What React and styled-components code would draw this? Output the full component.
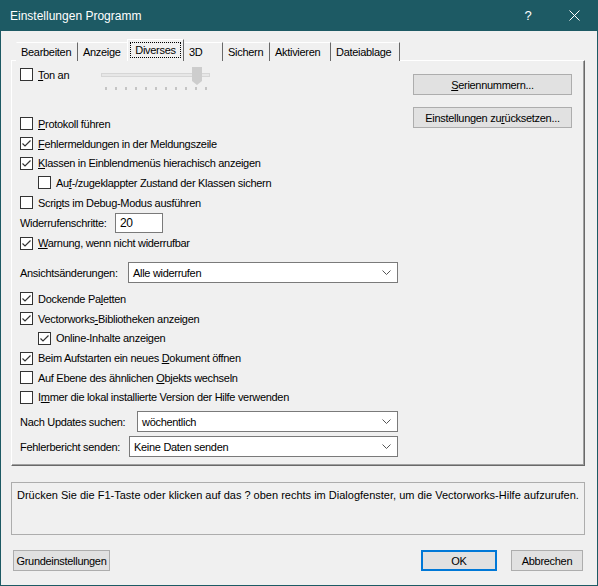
import React from "react";
import styled, { createGlobalStyle } from "styled-components";

const GlobalStyle = createGlobalStyle`
  html, body {
    margin: 0;
    padding: 0;
    background: #f0f0f0;
  }
  * {
    box-sizing: border-box;
  }
`;

const Window = styled.div`
  width: 598px;
  height: 586px;
  border: 1px solid #1d5a64;
  border-top: none;
  background: #f0f0f0;
  font-family: "Liberation Sans", Arial, sans-serif;
  font-size: 11px;
  letter-spacing: -0.3px;
  color: #000;
  display: flex;
  flex-direction: column;
`;

const TitleBar = styled.div`
  height: 31px;
  background: #1d5a64;
  color: #fff;
  display: flex;
  align-items: center;
  padding-left: 9px;
  font-size: 12px;
  letter-spacing: 0;
`;

const Title = styled.div`
  flex: 1;
`;

const TitleButton = styled.div`
  width: 46px;
  height: 31px;
  display: flex;
  align-items: center;
  justify-content: center;
  font-size: 13px;
`;

const Main = styled.div`
  padding: 9px 12px 0 10px;
  display: flex;
  flex-direction: column;
`;

const TabStrip = styled.div`
  display: flex;
  align-items: flex-end;
  height: 21px;
  padding-left: 5px;
  position: relative;
  z-index: 1;
  margin-bottom: -1px;
`;

const Tab = styled.div`
  width: ${(p) => p.$w}px;
  height: ${(p) => (p.$active ? 22 : 19)}px;
  padding: ${(p) => (p.$active ? "2px 2px 3px" : "0 4px")};
  display: flex;
  align-items: center;
  justify-content: ${(p) => (p.$active ? "stretch" : "flex-start")};
  border-top: 1px solid #fff;
  border-left: 1px solid ${(p) => (p.$active ? "#fff" : "transparent")};
  border-right: 1px solid #696969;
  background: #f0f0f0;
  margin-left: ${(p) => (p.$active ? -1 : 0)}px;
`;

const TabFocus = styled.div`
  flex: 1;
  height: 100%;
  border: 1px dotted #000;
  display: flex;
  align-items: center;
  justify-content: center;
`;

const Panel = styled.div`
  height: 406px;
  border-top: 1px solid #fff;
  border-left: 1px solid #fff;
  border-right: 1px solid #696969;
  border-bottom: 1px solid #696969;
  box-shadow: inset -1px -1px 0 #a0a0a0;
  display: flex;
  padding: 3px 11px 0 8px;
`;

const LeftCol = styled.div`
  width: 378px;
  display: flex;
  flex-direction: column;
`;

const RightCol = styled.div`
  margin-left: 15px;
  padding-top: 10px;
  display: flex;
  flex-direction: column;
  gap: 12px;
`;

const TopBlock = styled.div`
  height: 50px;
  display: flex;
  align-items: flex-start;
`;

const Row = styled.div`
  height: ${(p) => p.$h || 19.7}px;
  margin-top: ${(p) => p.$mt || 0}px;
  padding-left: ${(p) => p.$indent || 0}px;
  display: flex;
  align-items: center;
  white-space: nowrap;
  width: ${(p) => (p.$w ? `${p.$w}px` : "auto")};
`;

const Box = styled.span`
  width: 13px;
  height: 13px;
  border: 1px solid #333;
  background: #fff;
  margin-right: 5px;
  display: inline-flex;
  flex-shrink: 0;
`;

const Key = styled.span`
  text-decoration: underline;
  text-underline-offset: 1px;
`;

const Label = styled.span`
  width: ${(p) => p.$w}px;
  flex-shrink: 0;
`;

const NumInput = styled.div`
  width: 48px;
  height: 20px;
  background: #fff;
  border: 1px solid #7a7a7a;
  padding-left: 4px;
  display: flex;
  align-items: center;
  font-size: 12px;
`;

const Select = styled.div`
  flex: 1;
  height: 21px;
  background: #fff;
  border: 1px solid #7a7a7a;
  display: flex;
  align-items: center;
  padding: 0 6px 0 4px;
`;

const SelectText = styled.span`
  flex: 1;
`;

const Button = styled.div`
  width: ${(p) => p.$w}px;
  height: 21px;
  background: #e1e1e1;
  border: ${(p) => (p.$default ? "2px solid #0078d7" : "1px solid #adadad")};
  display: flex;
  align-items: center;
  justify-content: center;
  white-space: nowrap;
`;

const HelpBox = styled.div`
  margin-top: 16px;
  height: 53px;
  border: 1px solid #adadad;
  padding: 6px 5px;
  white-space: nowrap;
  letter-spacing: 0;
`;

const Footer = styled.div`
  margin-top: 15px;
  padding: 0 2px 0 2px;
  display: flex;
  gap: 14px;
`;

const Spacer = styled.div`
  flex: 1;
`;

const Check = ({ on }) => (
  <Box>
    {on && (
      <svg width="11" height="11" viewBox="0 0 11 11">
        <polyline points="1.5,5.5 4,8 9.5,2.5" fill="none" stroke="#333" strokeWidth="1.2" />
      </svg>
    )}
  </Box>
);

const CheckRow = ({ on, indent, mt, children }) => (
  <Row $indent={indent} $mt={mt}>
    <Check on={on} />
    <span>{children}</span>
  </Row>
);

const Chevron = () => (
  <svg width="9" height="6" viewBox="0 0 9 6">
    <polyline points="0.5,0.5 4.5,4.5 8.5,0.5" fill="none" stroke="#555" strokeWidth="1" />
  </svg>
);

const Combo = ({ label, labelW, value, mt }) => (
  <Row $h={21} $mt={mt}>
    <Label $w={labelW}>{label}</Label>
    <Select>
      <SelectText>{value}</SelectText>
      <Chevron />
    </Select>
  </Row>
);

const Slider = () => {
  const ticks = [];
  for (let i = 0; i <= 10; i++) {
    ticks.push(<line key={i} x1={7 + i * 10} y1="23" x2={7 + i * 10} y2="26" stroke="#9a9a9a" />);
  }
  return (
    <svg width="114" height="28" viewBox="0 0 114 28">
      <rect x="2.5" y="9.5" width="108" height="3" fill="#e7e7e7" stroke="#d6d6d6" />
      <path d="M93 3 H103 V17 L98 21 L93 17 Z" fill="#cdcdcd" />
      {ticks}
    </svg>
  );
};

const tabs = [
  { name: "Bearbeiten", w: 62 },
  { name: "Anzeige", w: 50 },
  { name: "Diverses", w: 57, active: true },
  { name: "3D", w: 39 },
  { name: "Sichern", w: 47 },
  { name: "Aktivieren", w: 61 },
  { name: "Dateiablage", w: 69 },
];

const App = () => {
  return (
    <>
      <GlobalStyle />
      <Window>
        <TitleBar>
          <Title>Einstellungen Programm</Title>
          <TitleButton>?</TitleButton>
          <TitleButton>
            <svg width="11" height="11" viewBox="0 0 11 11">
              <path d="M0.5 0.5 L10.5 10.5 M10.5 0.5 L0.5 10.5" stroke="#fff" strokeWidth="1" />
            </svg>
          </TitleButton>
        </TitleBar>

        <Main>
          <TabStrip>
            {tabs.map((t) =>
              t.active ? (
                <Tab key={t.name} $w={t.w} $active>
                  <TabFocus>{t.name}</TabFocus>
                </Tab>
              ) : (
                <Tab key={t.name} $w={t.w}>
                  {t.name}
                </Tab>
              )
            )}
          </TabStrip>

          <Panel>
            <LeftCol>
              <TopBlock>
                <Row $h={21} $w={79}>
                  <Check />
                  <span>
                    <Key>T</Key>on an
                  </span>
                </Row>
                <Slider />
              </TopBlock>

              <CheckRow>
                <Key>P</Key>rotokoll führen
              </CheckRow>
              <CheckRow on>
                <Key>F</Key>ehlermeldungen in der Meldungszeile
              </CheckRow>
              <CheckRow on>
                <Key>K</Key>lassen in Einblendmenüs hierachisch anzeigen
              </CheckRow>
              <CheckRow indent={18}>
                Au<Key>f</Key>-/zugeklappter Zustand der Klassen sichern
              </CheckRow>
              <CheckRow>
                Scri<Key>p</Key>ts im Debug-Modus ausführen
              </CheckRow>
              <Row $h={21}>
                <Label $w={95}>Widerrufenschritte:</Label>
                <NumInput>20</NumInput>
              </Row>
              <CheckRow on>
                <Key>W</Key>arnung, wenn nicht widerrufbar
              </CheckRow>

              <Combo mt={9} label="Ansichtsänderungen:" labelW={108} value="Alle widerrufen" />

              <CheckRow on mt={6}>
                Dockende Pa<Key>l</Key>etten
              </CheckRow>
              <CheckRow on>
                Vectorworks<Key>-</Key>Bibliotheken anzeigen
              </CheckRow>
              <CheckRow on indent={18}>
                Online-Inhalte anzei<Key>g</Key>en
              </CheckRow>
              <CheckRow on>
                Beim Aufstarten ein neues <Key>D</Key>okument öffnen
              </CheckRow>
              <CheckRow>
                Auf Ebene des ähnlichen <Key>O</Key>bjekts wechseln
              </CheckRow>
              <CheckRow>
                I<Key>m</Key>mer die lokal installierte Version der Hilfe verwenden
              </CheckRow>

              <Combo mt={4} label="Nach Updates suchen:" labelW={117} value="wöchentlich" />
              <Combo mt={4} label="Fehlerbericht senden:" labelW={109} value="Keine Daten senden" />
            </LeftCol>

            <RightCol>
              <Button $w={159}>
                <Key>S</Key>eriennummern...
              </Button>
              <Button $w={159}>
                Einstellungen zu<Key>r</Key>ücksetzen...
              </Button>
            </RightCol>
          </Panel>

          <HelpBox>
            Drücken Sie die F1-Taste oder klicken auf das ? oben rechts im Dialogfenster, um die Vectorworks-Hilfe aufzurufen.
          </HelpBox>

          <Footer>
            <Button $w={97}>Grundeinstellungen</Button>
            <Spacer />
            <Button $w={76} $default>
              OK
            </Button>
            <Button $w={72}>Abbrechen</Button>
          </Footer>
        </Main>
      </Window>
    </>
  );
};

export default App;
